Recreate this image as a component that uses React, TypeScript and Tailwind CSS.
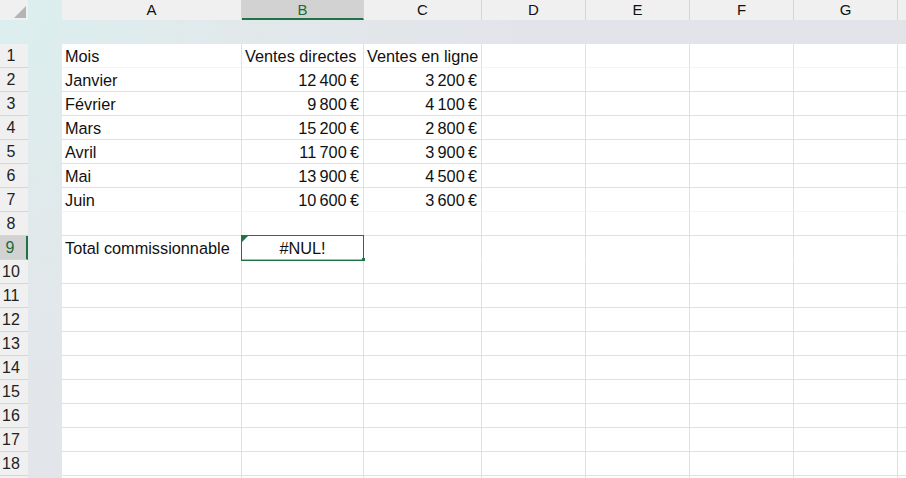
import React from "react";

const COLS = [
  { l: "A", w: 180 },
  { l: "B", w: 122 },
  { l: "C", w: 118 },
  { l: "D", w: 104 },
  { l: "E", w: 104 },
  { l: "F", w: 104 },
  { l: "G", w: 104 },
  { l: "", w: 104 },
];

const N = "\u202F";
type Cell = { t: string; align?: "l" | "r" | "c" };
const DATA: Record<number, Cell[]> = {
  1: [{ t: "Mois" }, { t: "Ventes directes" }, { t: "Ventes en ligne" }],
  2: [{ t: "Janvier" }, { t: `12${N}400${N}€`, align: "r" }, { t: `3${N}200${N}€`, align: "r" }],
  3: [{ t: "Février" }, { t: `9${N}800${N}€`, align: "r" }, { t: `4${N}100${N}€`, align: "r" }],
  4: [{ t: "Mars" }, { t: `15${N}200${N}€`, align: "r" }, { t: `2${N}800${N}€`, align: "r" }],
  5: [{ t: "Avril" }, { t: `11${N}700${N}€`, align: "r" }, { t: `3${N}900${N}€`, align: "r" }],
  6: [{ t: "Mai" }, { t: `13${N}900${N}€`, align: "r" }, { t: `4${N}500${N}€`, align: "r" }],
  7: [{ t: "Juin" }, { t: `10${N}600${N}€`, align: "r" }, { t: `3${N}600${N}€`, align: "r" }],
  9: [{ t: "Total commissionnable" }, { t: "#NUL!", align: "c" }],
};

const FAINT = new Set([1, 7]);

export default function App() {
  const rows = Array.from({ length: 19 }, (_, i) => i + 1);
  return (
    <div
      className="w-[906px] h-[478px] overflow-hidden text-[#111] bg-[radial-gradient(circle_at_0_0,#dbefee_0px,#e1e9eb_220px,#e3e4e9_520px)]"
      style={{ fontFamily: '"Liberation Sans", Arial, sans-serif' }}
    >
      {/* column headers */}
      <div className="flex h-[20px]">
        <div className="w-[28px] shrink-0 bg-[#f0f0f0] relative">
          <svg width="28" height="20" className="absolute left-0 top-0">
            <polygon points="26,6 26,18 14,18" fill="#b4b4b4" />
          </svg>
        </div>
        <div className="w-[34px] shrink-0" />
        {COLS.map((c, i) => {
          const sel = c.l === "B";
          return (
            <div
              key={i}
              style={{ width: c.w }}
              className={`shrink-0 box-border border-r border-[#d5d5d5] text-center text-[15px] leading-[20px] ${
                sel
                  ? "bg-[#d2d2d2] text-[#1c6b3c] border-b-2 border-b-[#217346] leading-[18px]"
                  : "bg-[#f0f0f0]"
              }`}
            >
              {c.l}
            </div>
          );
        })}
      </div>
      {/* band */}
      <div className="h-[24px]" />
      {rows.map((r) => {
        const sel = r === 9;
        const cells = DATA[r] || [];
        const lineCls =
          r === 9 ? "border-b-transparent" : FAINT.has(r) ? "border-b-[#f4f4f4]" : "border-b-[#e1e1e1]";
        return (
          <div key={r} className="flex h-[24px]">
            <div
              className={`w-[28px] shrink-0 box-border border-b border-[#d6d6d6] text-[16px] leading-[22px] pt-[1px] pr-[6px] text-center ${
                sel ? "bg-[#d2d2d2] text-[#1c6b3c] border-r-2 border-r-[#217346]" : "bg-[#f0f0f0] text-[#222]"
              }`}
            >
              {r <= 18 ? r : ""}
            </div>
            <div className="w-[34px] shrink-0" />
            {COLS.map((c, ci) => {
              const cell = cells[ci];
              const isSel = sel && ci === 1;
              return (
                <div
                  key={ci}
                  style={{ width: c.w }}
                  className={`shrink-0 box-border bg-white border-r border-r-[#e1e1e1] border-b ${lineCls} text-[16.3px] leading-[22px] pt-[1px] whitespace-nowrap relative ${
                    cell?.align === "r" ? "text-right pr-[4px]" : cell?.align === "c" ? "text-center" : "pl-[3px]"
                  } ${isSel ? "overflow-visible z-10" : ""}`}
                >
                  {cell?.t}
                  {isSel && (
                    <>
                      <div className="absolute left-[-1px] top-[-1px] w-[123px] h-[26px] border border-[#217346] pointer-events-none">
                        <div className="absolute left-0 right-0 bottom-0 h-[1px] bg-[#9cc2a9]" />
                      </div>
                      <svg width="6" height="6" className="absolute left-0 top-0">
                        <polygon points="0,0 6,0 0,6" fill="#217346" />
                      </svg>
                      <div className="absolute right-[-2px] bottom-[-2px] w-[3px] h-[3px] bg-[#217346]" />
                    </>
                  )}
                </div>
              );
            })}
          </div>
        );
      })}
    </div>
  );
}
